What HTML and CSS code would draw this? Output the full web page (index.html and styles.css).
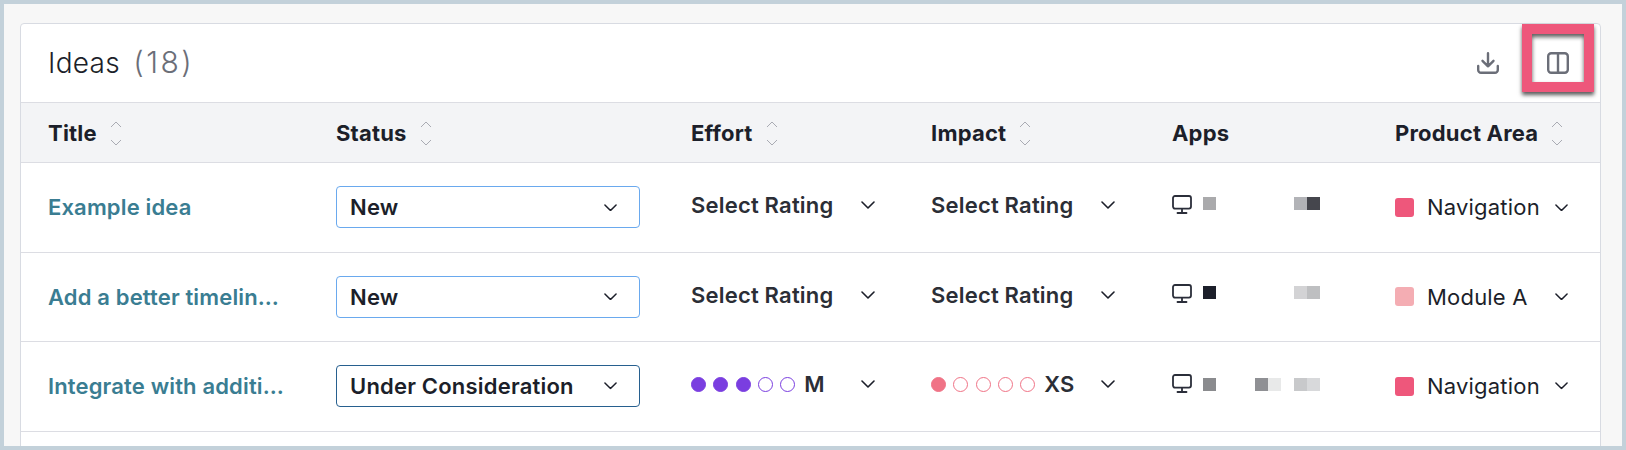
FILE: index.html
```html
<!DOCTYPE html>
<html lang="en">
<head>
    <meta charset="UTF-8">
    <title>Ideas</title>
    <link rel="stylesheet" href="styles.css">
</head>
<body>
    <svg class="sprites" width="0" height="0">
        <symbol id="chevron" viewBox="0 0 14 8"><path d="M1 1l6 6 6-6" fill="none" stroke="currentColor" stroke-width="1.6" stroke-linecap="round" stroke-linejoin="round"/></symbol>
        <symbol id="sort" viewBox="0 0 12 24"><path d="M1 6l5-5 5 5M1 19l5 5 5-5" fill="none" stroke="currentColor" stroke-width="1"/></symbol>
        <symbol id="monitor" viewBox="0 0 20 19"><rect x="1" y="1" width="18" height="12.6" rx="2" fill="none" stroke="currentColor" stroke-width="1.8"/><path d="M10 14v3.6M5.5 18h9" fill="none" stroke="currentColor" stroke-width="1.8" stroke-linecap="round"/></symbol>
    </svg>

    <div class="frame">
        <div class="card">
            <div class="card-header">
                <h1 class="card-title">Ideas <span class="count">(18)</span></h1>
                <div class="card-actions">
                    <button class="icon-button">
                        <svg width="22" height="22" viewBox="0 0 22 22"><path d="M11 1.2v13M5.5 8.8l5.5 5.5 5.5-5.5M1.2 14v4a2.8 2.8 0 0 0 2.8 2.8h14a2.8 2.8 0 0 0 2.8-2.8v-4" fill="none" stroke="currentColor" stroke-width="2.4" stroke-linecap="round" stroke-linejoin="round"/></svg>
                    </button>
                    <button class="icon-button">
                        <svg width="22" height="22" viewBox="0 0 22 22"><rect x="1.2" y="1.2" width="19.6" height="19.6" rx="3" fill="none" stroke="currentColor" stroke-width="2.4"/><path d="M11 1v20" stroke="currentColor" stroke-width="2.4"/></svg>
                    </button>
                </div>
                <div class="callout"></div>
            </div>

            <div class="row head">
                <div class="col-title">Title <svg class="sort"><use href="#sort"/></svg></div>
                <div class="col-status">Status <svg class="sort"><use href="#sort"/></svg></div>
                <div class="col-effort">Effort <svg class="sort"><use href="#sort"/></svg></div>
                <div class="col-impact">Impact <svg class="sort"><use href="#sort"/></svg></div>
                <div class="col-apps">Apps</div>
                <div class="col-area">Product Area <svg class="sort"><use href="#sort"/></svg></div>
            </div>

            <div class="row">
                <div class="col-title"><a class="idea-link">Example idea</a></div>
                <div class="col-status"><div class="select">New <svg class="chev small"><use href="#chevron"/></svg></div></div>
                <div class="col-effort"><div class="rating">Select Rating <svg class="chev"><use href="#chevron"/></svg></div></div>
                <div class="col-impact"><div class="rating">Select Rating <svg class="chev"><use href="#chevron"/></svg></div></div>
                <div class="col-apps">
                    <div class="apps">
                        <svg class="monitor"><use href="#monitor"/></svg>
                        <span class="blur first" style="background:#aaaaac"></span>
                        <span class="blur-group"></span>
                        <span class="blur-group"><span class="blur" style="background:#b2b3b7"></span><span class="blur" style="background:#45464d"></span></span>
                    </div>
                </div>
                <div class="col-area"><div class="area"><span class="swatch strong"></span><span class="area-name">Navigation</span><svg class="chev small"><use href="#chevron"/></svg></div></div>
            </div>

            <div class="row">
                <div class="col-title"><a class="idea-link">Add a better timelin…</a></div>
                <div class="col-status"><div class="select">New <svg class="chev small"><use href="#chevron"/></svg></div></div>
                <div class="col-effort"><div class="rating">Select Rating <svg class="chev"><use href="#chevron"/></svg></div></div>
                <div class="col-impact"><div class="rating">Select Rating <svg class="chev"><use href="#chevron"/></svg></div></div>
                <div class="col-apps">
                    <div class="apps">
                        <svg class="monitor"><use href="#monitor"/></svg>
                        <span class="blur first" style="background:#1c1f2a"></span>
                        <span class="blur-group"></span>
                        <span class="blur-group"><span class="blur" style="background:#d3d3d5"></span><span class="blur" style="background:#bebfc1"></span></span>
                    </div>
                </div>
                <div class="col-area"><div class="area"><span class="swatch soft"></span><span class="area-name">Module A</span><svg class="chev small"><use href="#chevron"/></svg></div></div>
            </div>

            <div class="row">
                <div class="col-title"><a class="idea-link">Integrate with additi…</a></div>
                <div class="col-status"><div class="select active">Under Consideration <svg class="chev small"><use href="#chevron"/></svg></div></div>
                <div class="col-effort">
                    <div class="rating">
                        <span class="dots effort"><i class="on"></i><i class="on"></i><i class="on"></i><i></i><i></i></span>
                        <b>M</b>
                        <svg class="chev"><use href="#chevron"/></svg>
                    </div>
                </div>
                <div class="col-impact">
                    <div class="rating">
                        <span class="dots impact"><i class="on"></i><i></i><i></i><i></i><i></i></span>
                        <b>XS</b>
                        <svg class="chev"><use href="#chevron"/></svg>
                    </div>
                </div>
                <div class="col-apps">
                    <div class="apps low">
                        <svg class="monitor"><use href="#monitor"/></svg>
                        <span class="blur first" style="background:#8a8b8e"></span>
                        <span class="blur-group"><span class="blur" style="background:#8f9094"></span><span class="blur" style="background:#e8e9e9"></span></span>
                        <span class="blur-group"><span class="blur" style="background:#c8c9cb"></span><span class="blur" style="background:#d8d9db"></span></span>
                    </div>
                </div>
                <div class="col-area"><div class="area"><span class="swatch strong"></span><span class="area-name">Navigation</span><svg class="chev small"><use href="#chevron"/></svg></div></div>
            </div>

            <div class="row"></div>
        </div>
    </div>
</body>
</html>
```

FILE: styles.css
```css
* {
    box-sizing: border-box;
}

body {
    margin: 0;
    font-family: Inter, "Liberation Sans", sans-serif;
    color: #1c1f2a;
}

.sprites {
    position: absolute;
}

.frame {
    height: 450px;
    border: 4px solid #c3d1da;
    background-color: #f7f7f7;
    padding: 19px 0 0 16px;
    overflow: hidden;
}

.card {
    width: 1581px;
    height: 500px;
    background-color: #ffffff;
    border: 1px solid #d8dbe2;
    border-radius: 4px;
}

.card-header {
    position: relative;
    height: 78px;
    display: flex;
    align-items: center;
    justify-content: space-between;
    padding: 0 31px 0 27px;
}

.card-title {
    margin: 0 0 2px;
    font-size: 28px;
    font-weight: 300;
    letter-spacing: 0.3px;
}

.count {
    margin-left: 5px;
    font-size: 30px;
    color: #6b6e78;
    letter-spacing: 2.5px;
}

.card-actions {
    display: flex;
    gap: 48px;
}

.icon-button {
    width: 22px;
    height: 22px;
    padding: 0;
    border: none;
    background: none;
    color: #6b6e78;
}

.callout {
    position: absolute;
    top: 0;
    right: 6px;
    width: 72px;
    height: 68px;
    border: 10px solid #ee577b;
    box-shadow: 0 3px 4px rgba(0, 0, 0, 0.65), inset 0 3px 4px rgba(0, 0, 0, 0.65);
}

.row {
    display: flex;
    height: 89.4px;
    padding-bottom: 0.6px;
    border-top: 1px solid #dcdde3;
    font-size: 22px;
    letter-spacing: 0.2px;
}

.row.head {
    height: 60.4px;
    padding-bottom: 0;
    background-color: #f3f4f6;
    font-weight: 700;
}

.row > div {
    display: flex;
    align-items: center;
}

.row.head > div {
    gap: 13px;
}

.col-title {
    width: 315px;
    padding-left: 27px;
}

.col-status {
    width: 355px;
}

.col-effort {
    width: 240px;
}

.col-impact {
    width: 241px;
}

.col-apps {
    width: 223px;
}

.col-area {
    width: 205px;
}

.sort {
    width: 12px;
    height: 24px;
    color: #a9abb3;
}

.idea-link {
    color: #3a7d92;
    font-weight: 600;
    letter-spacing: 0.15px;
}

.select {
    width: 304px;
    height: 42px;
    display: flex;
    align-items: center;
    justify-content: space-between;
    padding: 0 22px 0 13px;
    border: 1px solid #6aa9ee;
    border-radius: 4px;
    font-weight: 600;
}

.select.active {
    border-color: #27608f;
}

.chev {
    width: 14px;
    height: 8px;
    flex-shrink: 0;
    color: #1c1f2a;
}

.chev.small {
    width: 13px;
    height: 7.5px;
}

.rating {
    width: 184px;
    display: flex;
    align-items: center;
    justify-content: space-between;
    padding-bottom: 4px;
    font-weight: 600;
    color: #2b2e36;
}

.rating b {
    margin-left: 9px;
    margin-right: auto;
    font-weight: 600;
}

.dots {
    display: flex;
    gap: 7.3px;
}

.dots i {
    width: 15px;
    height: 15px;
    border: 1.5px solid;
    border-radius: 50%;
}

.dots.effort i {
    border-color: #7a3ee0;
}

.dots.effort i.on {
    background-color: #7a3ee0;
}

.dots.impact i {
    border-color: #f07386;
}

.dots.impact i.on {
    background-color: #f07386;
}

.apps {
    display: flex;
    align-items: center;
    padding-bottom: 8px;
}

.apps.low > span {
    margin-top: 4px;
}

.monitor {
    width: 20px;
    height: 19px;
    margin-top: 2px;
    color: #2b2e3a;
}

.blur {
    display: block;
    width: 13px;
    height: 13px;
}

.blur.first {
    margin: 0 39px 0 11px;
}

.blur-group {
    display: flex;
    width: 26px;
    margin-right: 13px;
}

.area {
    width: 173px;
    display: flex;
    align-items: center;
}

.swatch {
    width: 19px;
    height: 19px;
    border-radius: 3px;
}

.swatch.strong {
    background-color: #ee577b;
}

.swatch.soft {
    background-color: #f4adb3;
}

.area-name {
    margin-left: 13px;
    margin-right: auto;
    font-weight: 400;
}
```
